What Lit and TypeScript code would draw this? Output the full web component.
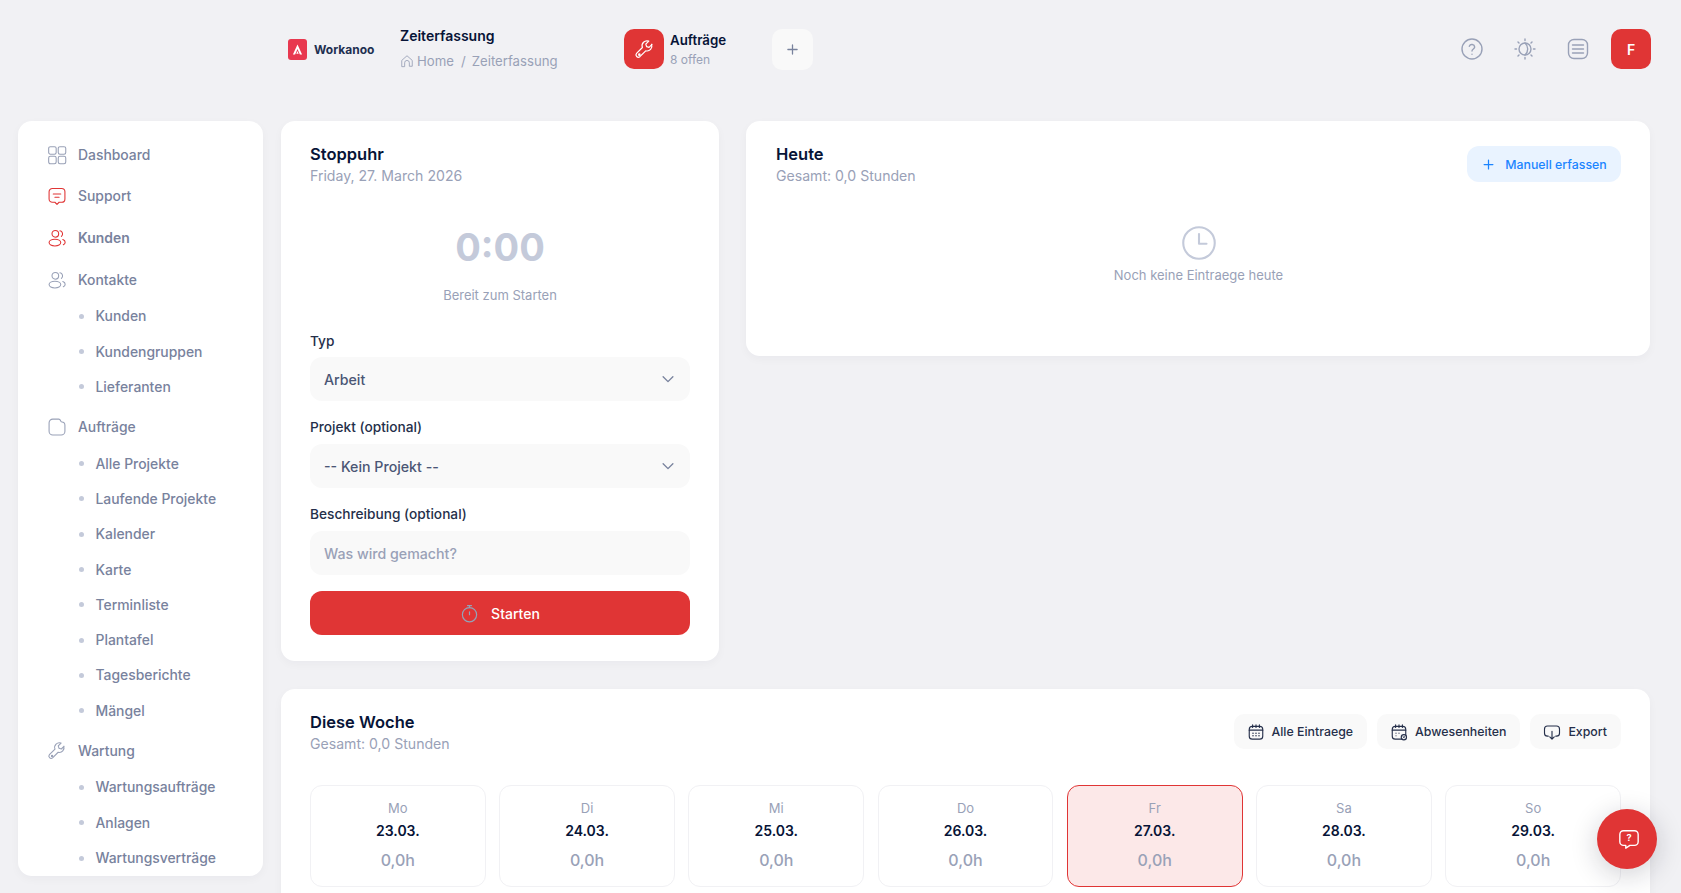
import { LitElement, html, css, svg } from "lit";
import { customElement } from "lit/decorators.js";

const ic = (body: unknown, size = 18, vb = 24, sw = 1.5) => html`<svg class="ic" width=${size} height=${size} viewBox="0 0 ${vb} ${vb}" fill="none" stroke="currentColor" stroke-width=${sw} stroke-linecap="round" stroke-linejoin="round">${body}</svg>`;

const wrench = svg`<path d="M20.6 6.2l-3.4 3.4-2.8-.9-.9-2.8 3.4-3.4a5.6 5.6 0 0 0-7.3 7.2l-6.7 6.7a2.7 2.7 0 0 0 3.8 3.8l6.7-6.7a5.6 5.6 0 0 0 6.7-7.3z"/><circle cx="6.1" cy="17.9" r=".8"/>`;
const grid = svg`<rect x="2" y="2" width="9" height="9" rx="2"/><rect x="13.500" y="2" width="9" height="9" rx="2"/><rect x="2" y="13.500" width="9" height="9" rx="2"/><rect x="13.500" y="13.500" width="9" height="9" rx="2"/>`;
const support = svg`<path d="M6.500 3h11a4 4 0 0 1 4 4v8.500a4 4 0 0 1-4 4h-3L12 22l-2.500-2.500h-3a4 4 0 0 1-4-4V7a4 4 0 0 1 4-4z"/><path d="M7.500 9.500h9M9.500 13.500h5"/>`;
const people = svg`<circle cx="10" cy="7" r="4"/><ellipse cx="9.500" cy="17.500" rx="7" ry="4"/><path d="M15.500 3.300a3.800 3.800 0 0 1 1.800 6.700M19 13.800c1.800.7 2.800 1.900 2.800 3.300 0 1.200-.8 2.300-2.200 3"/>`;
const folder = svg`<path d="M2.500 7A4.500 4.500 0 0 1 7 2.500h7c1.200 0 1.800.6 2.200 1.700l.3.800c.2.600.6.900 1.300.9 2.600 0 3.700 1.500 3.700 4V17a4.500 4.500 0 0 1-4.500 4.500H7A4.500 4.500 0 0 1 2.500 17z"/>`;
const cal = svg`<rect x="3" y="4.500" width="18" height="17" rx="4"/><path d="M3 9.500h18M7.500 2.500v3.500M12 2.500v3.500M16.500 2.500v3.500"/><path d="M8 13.500h.01M12 13.500h.01M16 13.500h.01M8 17h.01M12 17h.01M16 17h.01" stroke-width="2"/>`;
const cal2 = svg`<rect x="3" y="4.500" width="18" height="17" rx="4"/><path d="M3 9.500h18M7.500 2.500v3.500M12 2.500v3.500M16.500 2.500v3.500M8 13.500h.01M12 13.500h.01M8 17h.01"/><circle cx="18.500" cy="19" r="3.500" fill="#f9f9f9"/><path d="M17.300 17.800l2.400 2.400M19.700 17.800l-2.400 2.400" stroke-width="1"/>`;
const exportIc = svg`<path d="M7 17.500H6a4 4 0 0 1-4-4V8a4 4 0 0 1 4-4h12a4 4 0 0 1 4 4v5.500a4 4 0 0 1-4 4h-1"/><path d="M12 11v10M9 18.500l3 3 3-3"/>`;
const chevron = svg`<path d="M5.500 9l6.500 6.500L18.500 9"/>`;

const NAV: { label: string; icon: unknown; cls?: string; subs?: string[] }[] = [
  { label: "Dashboard", icon: grid },
  { label: "Support", icon: support, cls: "red" },
  { label: "Kunden", icon: people, cls: "red strong" },
  { label: "Kontakte", icon: people, subs: ["Kunden", "Kundengruppen", "Lieferanten"] },
  { label: "Aufträge", icon: folder, subs: ["Alle Projekte", "Laufende Projekte", "Kalender", "Karte", "Terminliste", "Plantafel", "Tagesberichte", "Mängel"] },
  { label: "Wartung", icon: wrench, subs: ["Wartungsaufträge", "Anlagen", "Wartungsverträge"] },
];

const DAYS = [
  ["Mo", "23.03."], ["Di", "24.03."], ["Mi", "25.03."], ["Do", "26.03."], ["Fr", "27.03."], ["Sa", "28.03."], ["So", "29.03."],
];

@customElement("app-root")
export class AppRoot extends LitElement {
  static styles = css`
    :host { display: block; width: 1681px; height: 893px; overflow: hidden; position: relative; background: #f1f1f4; font-family: Inter, "Liberation Sans", sans-serif; color: #071437; }
    * { box-sizing: border-box; }
    .ic { display: block; flex: none; }
    header { height: 98px; margin-bottom: 23px; display: flex; align-items: center; padding: 0 30px 0 288px; }
    .logo { display: flex; align-items: center; gap: 7px; width: 112px; font-size: 12px; font-weight: 700; color: #1e2f50; }
    .logo-mark { width: 19px; height: 21px; border-radius: 3px; background: #e8384f; display: flex; align-items: center; justify-content: center; color: #fff; }
    .crumbs { width: 224px; margin-top: -3px; }
    .crumbs h1 { margin: 0 0 6px; font-size: 14px; line-height: 20px; font-weight: 600; }
    .path { display: flex; align-items: center; font-size: 13.2px; line-height: 18px; color: #99a1b7; gap: 3px; }
    .path .sep { margin: 0 3px 0 4px; }
    .tile { width: 40px; height: 40px; border-radius: 10px; background: #e03535; color: #fff; display: flex; align-items: center; justify-content: center; margin-right: 6px; }
    .jobs { width: 102px; }
    .jobs b { display: block; font-size: 13.300px; line-height: 18px; font-weight: 600; }
    .jobs span { display: block; margin-top: 3px; font-size: 12px; line-height: 16px; color: #99a1b7; }
    .plus { width: 41px; height: 41px; border-radius: 10px; background: #f9f9f9; color: #78829d; display: flex; align-items: center; justify-content: center; }
    .right { margin-left: auto; display: flex; align-items: center; color: #99a1b7; }
    .right .slot { width: 53px; display: flex; justify-content: center; }
    .avatar { margin-left: 7px; width: 40px; height: 40px; border-radius: 10px; background: #e03535; color: #fff; font-size: 14px; font-weight: 600; display: flex; align-items: center; justify-content: center; }

    .layout { display: grid; grid-template-columns: 245px 1fr; gap: 18px; padding: 0 31px 0 18px; align-items: start; }
    .side, .card { background: #fff; border-radius: 14px; box-shadow: 0 3px 10px rgba(15, 20, 60, .035); }
    .side { height: 755px; padding: 13px 0 0 29px; overflow: hidden; color: #78829d; font-size: 13.900px; font-weight: 500; }
    .item { height: 41.67px; display: flex; align-items: center; gap: 11px; color: #78829d; }
    .item .ico { color: #99a1b7; display: flex; }
    .item.red .ico { color: #e03535; }
    .item.strong { font-weight: 600; }
    .subs { margin: -2px 0 2px; }
    .sub { height: 35.27px; display: flex; align-items: center; padding-left: 32px; gap: 11.500px; }
    .dot { width: 5px; height: 5px; border-radius: 50%; background: #c4cada; }

    .main { display: grid; grid-template-columns: 438px 904px; gap: 28px 27px; }
    .card { padding: 0 29px; }
    .head { display: flex; justify-content: space-between; align-items: flex-start; }
    h2 { margin: 0; font-size: 16.500px; line-height: 22px; font-weight: 600; }
    .subt { font-size: 14.100px; line-height: 20px; color: #99a1b7; margin-top: 1px; }
    .timer-card { height: 540px; padding-top: 22px; }
    .today { height: 235px; padding: 22px 29px 0 30px; }
    .time { margin-top: 37px; text-align: center; font-size: 38px; line-height: 48px; font-weight: 700; color: #c4cada; }
    .ready { margin-top: 15px; text-align: center; font-size: 13px; line-height: 18px; color: #99a1b7; }
    label { display: block; font-size: 13.700px; line-height: 20px; font-weight: 500; color: #252f4a; margin-bottom: 7px; }
    .ready + label { margin-top: 27px; margin-bottom: 6px; }
    .field { position: relative; height: 44px; margin-bottom: 16px; }
    select, input { width: 100%; height: 100%; border: 0; outline: 0; appearance: none; background: #f9f9f9; border-radius: 12px; padding: 0 14px; font: 500 14.200px Inter, "Liberation Sans", sans-serif; color: #4b5675; }
    input::placeholder { color: #99a1b7; opacity: 1; }
    .chev { position: absolute; right: 13px; top: 13px; color: #78829d; pointer-events: none; }
    .start { width: 100%; height: 44px; border: 0; border-radius: 12px; background: #e03535; color: #fff; font: 500 14px Inter, "Liberation Sans", sans-serif; display: flex; align-items: center; justify-content: center; gap: 12px; }
    .start .ic { color: #93a3b8; }
    .manual { margin-top: 3px; height: 36px; width: 154px; border: 0; border-radius: 12px; background: #e9f3ff; color: #1b84ff; font: 500 12.350px Inter, "Liberation Sans", sans-serif; display: flex; align-items: center; justify-content: center; gap: 9px; }
    .empty { margin-top: 39px; display: flex; flex-direction: column; align-items: center; gap: 5px; color: #99a1b7; font-size: 13px; line-height: 18px; }
    .empty .ic { color: #c4cada; }
    .week { grid-column: 1 / -1; height: 260px; padding-top: 22px; }
    .actions { display: flex; gap: 10px; margin-top: 3px; margin-left: auto; }
    .act { height: 35px; border: 0; padding: 0 14px 0 13px; border-radius: 10px; background: #f9f9f9; color: #252f4a; font: 500 12.350px Inter, "Liberation Sans", sans-serif; display: flex; align-items: center; gap: 7px; white-space: nowrap; }
    .days { margin-top: 31px; display: grid; grid-template-columns: repeat(7, 1fr); gap: 13.500px; }
    .day { height: 102px; border: 1px solid #f1f1f4; border-radius: 12px; text-align: center; padding-top: 13px; }
    .day.now { background: #fce8e8; border-color: #e03535; }
    .dn { font-size: 13px; line-height: 18px; color: #99a1b7; }
    .dd { margin-top: 5px; font-size: 14px; line-height: 18px; font-weight: 600; color: #071437; }
    .dh { margin-top: 10px; font-size: 16px; line-height: 20px; font-weight: 500; color: #99a1b7; }
    .fab { position: absolute; left: 1597px; top: 809px; width: 60px; height: 60px; border-radius: 50%; background: #e03535; color: #fff; border: 0; display: flex; align-items: center; justify-content: center; box-shadow: 0 6px 28px rgba(20, 20, 40, .2); padding: 0 0 0 4px; }
    .qm { fill: #fff; stroke: none; font: 700 10px Inter, "Liberation Sans", sans-serif; }
  `;

  render() {
    return html`
      <header>
        <div class="logo">
          <span class="logo-mark"><svg width="11" height="11" viewBox="0 0 12 12" fill="currentColor"><path d="M6 .5l5 11H8.600L6 5.500 3.400 11.500H1zM6 7.600l1.300 2.900H4.700z"/></svg></span>
          Workanoo
        </div>
        <div class="crumbs">
          <h1>Zeiterfassung</h1>
          <div class="path">
            ${ic(svg`<path d="M3 21V11l9-8 9 8v10h-5v-6a4 4 0 0 0-8 0v6z"/>`, 14)}
            <span>Home</span><span class="sep">/</span><span>Zeiterfassung</span>
          </div>
        </div>
        <div class="tile">${ic(wrench, 21, 24, 1.4)}</div>
        <div class="jobs"><b>Aufträge</b><span>8 offen</span></div>
        <div class="plus">${ic(svg`<path d="M12 5.500v13M5.500 12h13"/>`, 17, 24, 1.8)}</div>
        <div class="right">
          <div class="slot">${ic(svg`<circle cx="12" cy="12" r="10"/><path d="M9.300 9.300a2.800 2.800 0 0 1 5.400.8c0 1.800-2.700 2-2.700 3.900M12 17.200h.01"/>`, 24, 24, 1.4)}</div>
          <div class="slot">${ic(svg`<circle cx="12" cy="12" r="6"/><path d="M12 6a8 8 0 0 1 0 12M12 2v1.500M12 20.500V22M2 12h1.500M20.500 12H22M5 5l1 1M18 18l1 1M5 19l1-1M18 6l1-1"/>`, 24, 24, 1.4)}</div>
          <div class="slot">${ic(svg`<rect x="2.500" y="2.500" width="19" height="19" rx="5.500"/><path d="M6.500 8h11M6.500 12h11M6.500 16h11"/>`, 24, 24, 1.4)}</div>
          <div class="avatar">F</div>
        </div>
      </header>
      <div class="layout">
        <nav class="side">
          ${NAV.map((n) => html`
            <div class="item ${n.cls ?? ""}"><span class="ico">${ic(n.icon, 20, 24, 1.3)}</span>${n.label}</div>
            ${n.subs ? html`<div class="subs">${n.subs.map((s) => html`<div class="sub"><span class="dot"></span>${s}</div>`)}</div>` : ""}
          `)}
        </nav>
        <div class="main">
          <section class="card timer-card">
            <h2>Stoppuhr</h2>
            <div class="subt">Friday, 27. March 2026</div>
            <div class="time">0:00</div>
            <div class="ready">Bereit zum Starten</div>
            <label>Typ</label>
            <div class="field"><select><option>Arbeit</option></select><span class="chev">${ic(chevron, 18, 24, 1.8)}</span></div>
            <label>Projekt (optional)</label>
            <div class="field"><select><option>-- Kein Projekt --</option></select><span class="chev">${ic(chevron, 18, 24, 1.8)}</span></div>
            <label>Beschreibung (optional)</label>
            <div class="field"><input placeholder="Was wird gemacht?" /></div>
            <button class="start">${ic(svg`<circle cx="12" cy="13.500" r="9"/><path d="M9.500 2h5M12 2v2.500M12 10v3.500"/>`, 19, 24, 1.5)}Starten</button>
          </section>
          <section class="card today">
            <div class="head">
              <div><h2>Heute</h2><div class="subt">Gesamt: 0,0 Stunden</div></div>
              <button class="manual">${ic(svg`<path d="M12 5v14M5 12h14"/>`, 15, 24, 2)}Manuell erfassen</button>
            </div>
            <div class="empty">
              ${ic(svg`<circle cx="12" cy="12" r="10.500"/><path d="M12 6v6.500h5"/>`, 36, 24, 1.400)}
              Noch keine Eintraege heute
            </div>
          </section>
          <section class="card week">
            <div class="head">
              <div><h2>Diese Woche</h2><div class="subt">Gesamt: 0,0 Stunden</div></div>
              <div class="actions">
                <button class="act">${ic(cal, 18)}Alle Eintraege</button>
                <button class="act">${ic(cal2, 18)}Abwesenheiten</button>
                <button class="act">${ic(exportIc, 18)}Export</button>
              </div>
            </div>
            <div class="days">
              ${DAYS.map((d) => html`<div class="day ${d[0] === "Fr" ? "now" : ""}"><div class="dn">${d[0]}</div><div class="dd">${d[1]}</div><div class="dh">0,0h</div></div>`)}
            </div>
          </section>
        </div>
      </div>
      <button class="fab" aria-label="Hilfe">
        ${ic(svg`<path d="M6 3h12a4 4 0 0 1 4 4v8a4 4 0 0 1-4 4h-5l-4.500 3v-3H6a4 4 0 0 1-4-4V7a4 4 0 0 1 4-4z"/><text class="qm" x="12" y="14.500" text-anchor="middle">?</text>`, 22)}
      </button>
    `;
  }
}
